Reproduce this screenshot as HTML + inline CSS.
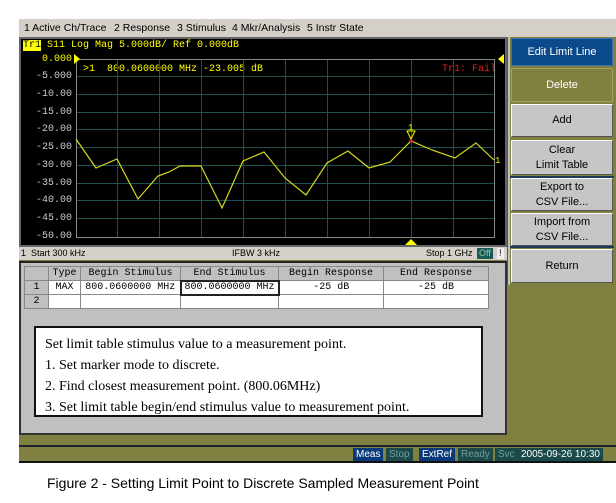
<!DOCTYPE html>
<html><head><style>
*{margin:0;padding:0;box-sizing:border-box}
body{width:616px;height:503px;background:#fff;position:relative;overflow:hidden;font-family:"Liberation Sans",sans-serif}
.a{position:absolute}
.mono{font-family:"Liberation Mono",monospace}
.btn{position:absolute;left:511px;width:102px;background:#c6c6c6;border:1px solid #fff;border-right-color:#555;border-bottom-color:#555;font-size:11px;text-align:center;display:flex;align-items:center;justify-content:center;line-height:15px;color:#000}
.lbl{position:absolute;left:22px;width:50px;text-align:right;color:#ccc;font-size:10px;font-family:"Liberation Mono",monospace}
td{border:1px solid #888;font-size:10px;font-family:"Liberation Mono",monospace;text-align:center;height:14px;padding:0}
.st{position:absolute;top:448px;height:13px;font-size:10px;line-height:13px;padding:0 3px}
.m{position:absolute;top:0}
</style></head><body>
<!-- menu -->
<div class="a" style="left:19px;top:19px;width:597px;height:18px;background:#d4d0c8;font-size:10.5px;line-height:18px">
<span class="m" style="left:5px">1 Active Ch/Trace</span><span class="m" style="left:95px">2 Response</span><span class="m" style="left:158px">3 Stimulus</span><span class="m" style="left:213px">4 Mkr/Analysis</span><span class="m" style="left:288px">5 Instr State</span></div>
<div class="a" style="left:19px;top:37px;width:597px;height:426px;background:#808040"></div>
<!-- graph -->
<div class="a" style="left:19px;top:37px;width:488px;height:210px;background:#000;border:2px solid #666"></div>
<div class="a mono" style="left:23px;top:40px;font-size:10px;color:#ff0;white-space:pre"><span style="background:#ff0;color:#000">Tr1</span> S11 Log Mag 5.000dB/ Ref 0.000dB</div>
<div class="a mono" style="left:83px;top:64px;font-size:10px;color:#ff0;white-space:pre">&gt;1  800.0600000 MHz -23.005 dB</div>
<div class="a mono" style="left:442px;top:64px;font-size:10px;color:#e02020">Tr1: Fail</div>
<div class="lbl" style="top:54px;color:#ff0">0.000</div>
<div class="lbl" style="top:71px">-5.000</div>
<div class="lbl" style="top:89px">-10.00</div>
<div class="lbl" style="top:107px">-15.00</div>
<div class="lbl" style="top:124px">-20.00</div>
<div class="lbl" style="top:142px">-25.00</div>
<div class="lbl" style="top:160px">-30.00</div>
<div class="lbl" style="top:178px">-35.00</div>
<div class="lbl" style="top:195px">-40.00</div>
<div class="lbl" style="top:213px">-45.00</div>
<div class="lbl" style="top:231px">-50.00</div>
<svg class="a" style="left:0;top:0" width="616" height="503">
<g stroke="#1a5050" stroke-width="1">
<line x1="76" y1="76.5" x2="495" y2="76.5"/><line x1="76" y1="94.5" x2="495" y2="94.5"/><line x1="76" y1="112.5" x2="495" y2="112.5"/><line x1="76" y1="129.5" x2="495" y2="129.5"/><line x1="76" y1="147.5" x2="495" y2="147.5"/><line x1="76" y1="165.5" x2="495" y2="165.5"/><line x1="76" y1="183.5" x2="495" y2="183.5"/><line x1="76" y1="200.5" x2="495" y2="200.5"/><line x1="76" y1="218.5" x2="495" y2="218.5"/>
<line x1="117.5" y1="59" x2="117.5" y2="237"/><line x1="159.5" y1="59" x2="159.5" y2="237"/><line x1="201.5" y1="59" x2="201.5" y2="237"/><line x1="243.5" y1="59" x2="243.5" y2="237"/><line x1="285.5" y1="59" x2="285.5" y2="237"/><line x1="327.5" y1="59" x2="327.5" y2="237"/><line x1="369.5" y1="59" x2="369.5" y2="237"/><line x1="411.5" y1="59" x2="411.5" y2="237"/><line x1="453.5" y1="59" x2="453.5" y2="237"/>
</g>
<rect x="76.5" y="59.5" width="418" height="178" fill="none" stroke="#888"/>
<polygon points="74,54 80,59 74,64" fill="#ff0"/>
<polygon points="504,54 498,59 504,64" fill="#ff0"/>
<polygon points="405,245 411,239 417,245" fill="#ff0"/>
<polyline fill="none" stroke="#d8d820" stroke-width="1.2" points="76,139 96,168 117,159 138,199 158,176 169,172 180,166 201,166 222,208 243,161 264,152 285,178 306,195 327,163 348,151 369,168 390,162 411,141 432,150 455,158 476,143 494,160"/>
<polygon points="407,131 415,131 411,139" fill="none" stroke="#ff0"/>
<circle cx="411" cy="141" r="1.8" fill="#e02020"/>
<text x="408" y="130" font-family="Liberation Mono" font-size="9" fill="#ff0">1</text>
<text x="495" y="163" font-family="Liberation Mono" font-size="9" fill="#ff0">1</text>
</svg>
<!-- status -->
<div class="a" style="left:19px;top:247px;width:488px;height:13px;background:#d4d0c8;font-size:9px;line-height:13px">
<span class="m" style="left:2px">1&nbsp; Start 300 kHz</span><span class="m" style="left:213px">IFBW 3 kHz</span><span class="m" style="left:407px">Stop 1 GHz</span><span class="m" style="left:458px;top:1px;height:11px;line-height:11px;background:#1a5a5a;color:#9c9;padding:0 2px">Off</span><span class="m" style="left:478px;top:1px;height:11px;line-height:11px;background:#eee;padding:0 2px">!</span></div>
<!-- table panel -->
<div class="a" style="left:19px;top:261px;width:488px;height:174px;background:#c0c0c0;border:2px solid #333;border-top-color:#222"></div>
<table class="a" style="left:24px;top:266px;border-collapse:collapse;background:#fff">
<tr style="background:#c0c0c0"><td style="width:24px"></td><td style="width:32px">Type</td><td style="width:100px">Begin Stimulus</td><td style="width:98px">End Stimulus</td><td style="width:105px">Begin Response</td><td style="width:105px">End Response</td></tr>
<tr><td style="background:#c0c0c0">1</td><td>MAX</td><td>800.0600000 MHz</td><td style="border:2px solid #222">800.0600000 MHz</td><td>-25 dB</td><td>-25 dB</td></tr>
<tr><td style="background:#c0c0c0">2</td><td></td><td></td><td></td><td></td><td></td></tr>
</table>
<div class="a" style="left:34px;top:326px;width:449px;height:91px;background:#fff;border:2px solid #111;font-family:'Liberation Serif',serif;font-size:14px;line-height:21px;padding:6px 0 0 9px;overflow:hidden;white-space:nowrap">Set limit table stimulus value to a measurement point.<br>1. Set marker mode to discrete.<br>2. Find closest measurement point. (800.06MHz)<br>3. Set limit table begin/end stimulus value to measurement point.</div>
<div class="a" style="left:19px;top:445px;width:597px;height:2px;background:#223"></div>
<div class="a" style="left:19px;top:461px;width:597px;height:2px;background:#111"></div>
<!-- buttons -->
<div class="a" style="left:507px;top:37px;width:3px;height:248px;background:#c0c0c0;border-left:1px solid #555"></div>
<div class="btn" style="top:38px;height:28px;background:#0a4a8a;color:#fff;border-color:#4070b0">Edit Limit Line</div>
<div class="btn" style="top:68px;height:34px;background:#808040;color:#fff;border-color:#a0a060">Delete</div>
<div class="btn" style="top:104px;height:33px">Add</div>
<div class="btn" style="top:140px;height:35px">Clear<br>Limit Table</div>
<div class="btn" style="top:178px;height:33px">Export to<br>CSV File...</div>
<div class="btn" style="top:213px;height:33px">Import from<br>CSV File...</div>
<div class="btn" style="top:249px;height:34px">Return</div>
<div class="a" style="left:510px;top:176px;width:104px;height:2px;background:#1a3a5a"></div>
<div class="a" style="left:510px;top:246px;width:104px;height:2px;background:#1a3a5a"></div>
<!-- bottom status -->
<div class="st" style="left:353px;background:#0a3a7a;color:#fff">Meas</div>
<div class="st" style="left:386px;background:#1a4a4a;color:#7a9a9a">Stop</div>
<div class="st" style="left:419px;background:#0a3a7a;color:#fff">ExtRef</div>
<div class="st" style="left:458px;background:#1a4a4a;color:#7a9a9a">Ready</div>
<div class="st" style="left:495px;background:#1a4a4a;color:#7a9a9a">Svc</div>
<div class="st" style="left:518px;background:#1a4a4a;color:#fff">2005-09-26 10:30</div>
<div class="a" style="left:47px;top:475px;font-size:14px;color:#000;white-space:nowrap">Figure 2 - Setting Limit Point to Discrete Sampled Measurement Point</div>
</body></html>
